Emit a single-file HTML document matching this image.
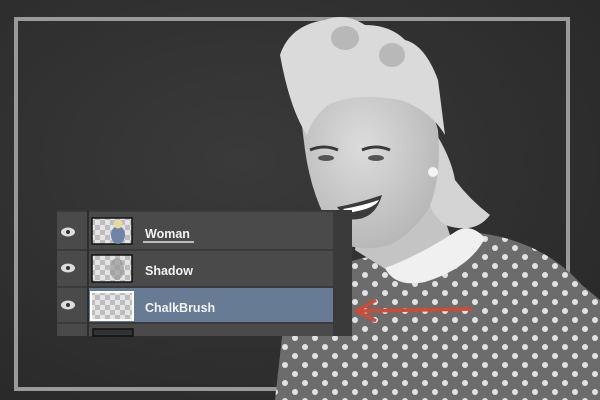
<!DOCTYPE html>
<html><head><style>
body{margin:0;width:600px;height:400px;overflow:hidden;background:#2e2e2e;font-family:"Liberation Sans",sans-serif}
</style></head><body>
<svg width="600" height="400" style="position:absolute;left:0;top:0">
<defs>
<pattern id="dots" width="20" height="18" patternUnits="userSpaceOnUse">
<circle cx="5" cy="5" r="3" fill="#e2e2e2"/><circle cx="15" cy="14" r="3" fill="#e2e2e2"/>
</pattern>
<pattern id="chk" width="10" height="10" patternUnits="userSpaceOnUse">
<rect width="10" height="10" fill="#e4e4e4"/><rect width="5" height="5" fill="#bdbdbd"/><rect x="5" y="5" width="5" height="5" fill="#bdbdbd"/>
</pattern>
<radialGradient id="bg" cx="0.4" cy="0.4" r="0.8"><stop offset="0" stop-color="#3a3a3a"/><stop offset="1" stop-color="#282828"/></radialGradient>
<radialGradient id="face" cx="0.45" cy="0.4" r="0.6"><stop offset="0" stop-color="#dcdcdc"/><stop offset="1" stop-color="#b8b8b8"/></radialGradient>
</defs>
<rect width="600" height="400" fill="url(#bg)"/>
<rect x="16" y="19" width="552" height="370" fill="none" stroke="#9a9a9a" stroke-width="4"/>
<!-- dress -->
<path d="M285 310 Q320 260 385 255 L470 232 Q540 238 582 285 L600 300 L600 400 L275 400 Z" fill="#6c6c6c"/>
<path d="M285 310 Q320 260 385 255 L470 232 Q540 238 582 285 L600 300 L600 400 L275 400 Z" fill="url(#dots)"/>
<!-- neck -->
<path d="M360 215 L440 205 L455 250 L395 275 L355 250 Z" fill="#c4c4c4"/>
<!-- back hair -->
<path d="M420 110 Q450 150 455 180 Q470 200 490 215 Q475 235 445 225 Q425 210 420 170 Z" fill="#d4d4d4"/>
<!-- collar -->
<path d="M385 268 Q420 255 455 232 Q470 222 485 238 Q470 268 425 282 Q395 288 385 268 Z" fill="#f0f0f0"/>
<!-- face -->
<path d="M300 110 Q310 80 360 78 Q425 80 438 130 Q442 180 428 210 Q410 235 390 245 Q350 255 335 235 Q312 200 305 150 Z" fill="url(#face)"/>
<!-- hair -->
<path d="M280 55 Q290 25 325 20 Q345 12 365 25 Q390 25 405 40 Q425 45 438 80 L445 135 Q430 110 400 100 Q355 92 328 105 Q312 118 307 135 Q290 110 280 55 Z" fill="#dadada"/>
<ellipse cx="345" cy="38" rx="14" ry="12" fill="#b8b8b8"/><ellipse cx="392" cy="55" rx="13" ry="12" fill="#b8b8b8"/>
<path d="M310 150 q14 -6 28 0" stroke="#3a3a3a" stroke-width="3" fill="none"/>
<path d="M362 150 q14 -6 28 0" stroke="#3a3a3a" stroke-width="3" fill="none"/>
<ellipse cx="326" cy="158" rx="8" ry="3" fill="#555"/><ellipse cx="376" cy="158" rx="8" ry="3" fill="#555"/>
<path d="M337 207 q22 -4 45 -12 q-8 28 -36 24 z" fill="#3a3a3a"/>
<path d="M343 209 q18 -3 36 -9 q-4 9 -32 13z" fill="#fff"/>
<circle cx="433" cy="172" r="5" fill="#f4f4f4"/>
<!-- panel -->
<rect x="57" y="210" width="295" height="126" fill="#3a3a3a"/>
<rect x="57" y="212" width="276" height="37" fill="#4a4a4a"/>
<rect x="57" y="251" width="276" height="35" fill="#4a4a4a"/>
<rect x="57" y="288" width="30" height="34" fill="#4a4a4a"/>
<rect x="89" y="288" width="244" height="34" fill="#687b95"/>
<rect x="57" y="324" width="276" height="12" fill="#4a4a4a"/>
<line x1="88" y1="210" x2="88" y2="336" stroke="#2e2e2e" stroke-width="2"/>
<g fill="#ddd"><ellipse cx="68" cy="232" rx="7" ry="4.5"/><ellipse cx="68" cy="268" rx="7" ry="4.5"/><ellipse cx="68" cy="305" rx="7" ry="4.5"/></g>
<g fill="#333"><circle cx="68" cy="232" r="2"/><circle cx="68" cy="268" r="2"/><circle cx="68" cy="305" r="2"/></g>
<g stroke="#111" stroke-width="1.5">
<rect x="92" y="218" width="40" height="26" fill="url(#chk)"/>
<rect x="92" y="255" width="40" height="27" fill="url(#chk)"/>
<rect x="91" y="292" width="42" height="28" fill="url(#chk)" stroke="#fff" stroke-width="2"/>
<rect x="93" y="329" width="40" height="7" fill="#333"/>
</g>
<ellipse cx="118" cy="235" rx="7" ry="9" fill="#6f84a8"/><circle cx="118" cy="224" r="4.5" fill="#e8d9a0"/>
<ellipse cx="117" cy="269" rx="7" ry="11" fill="#999" opacity="0.7"/>
<text x="145" y="238" fill="#f2f2f2" font-size="12.5" font-weight="bold">Woman</text>
<line x1="143" y1="242" x2="194" y2="242" stroke="#fff" stroke-width="1.2"/>
<text x="145" y="275" fill="#f2f2f2" font-size="12.5" font-weight="bold">Shadow</text>
<text x="145" y="312" fill="#f2f2f2" font-size="12.5" font-weight="bold">ChalkBrush</text>
<!-- arrow -->
<line x1="472" y1="309" x2="362" y2="311" stroke="#d24a33" stroke-width="3.5"/>
<path d="M376 300 L357 311 L376 321" stroke="#d24a33" stroke-width="3.5" fill="none"/>
</svg>
</body></html>
